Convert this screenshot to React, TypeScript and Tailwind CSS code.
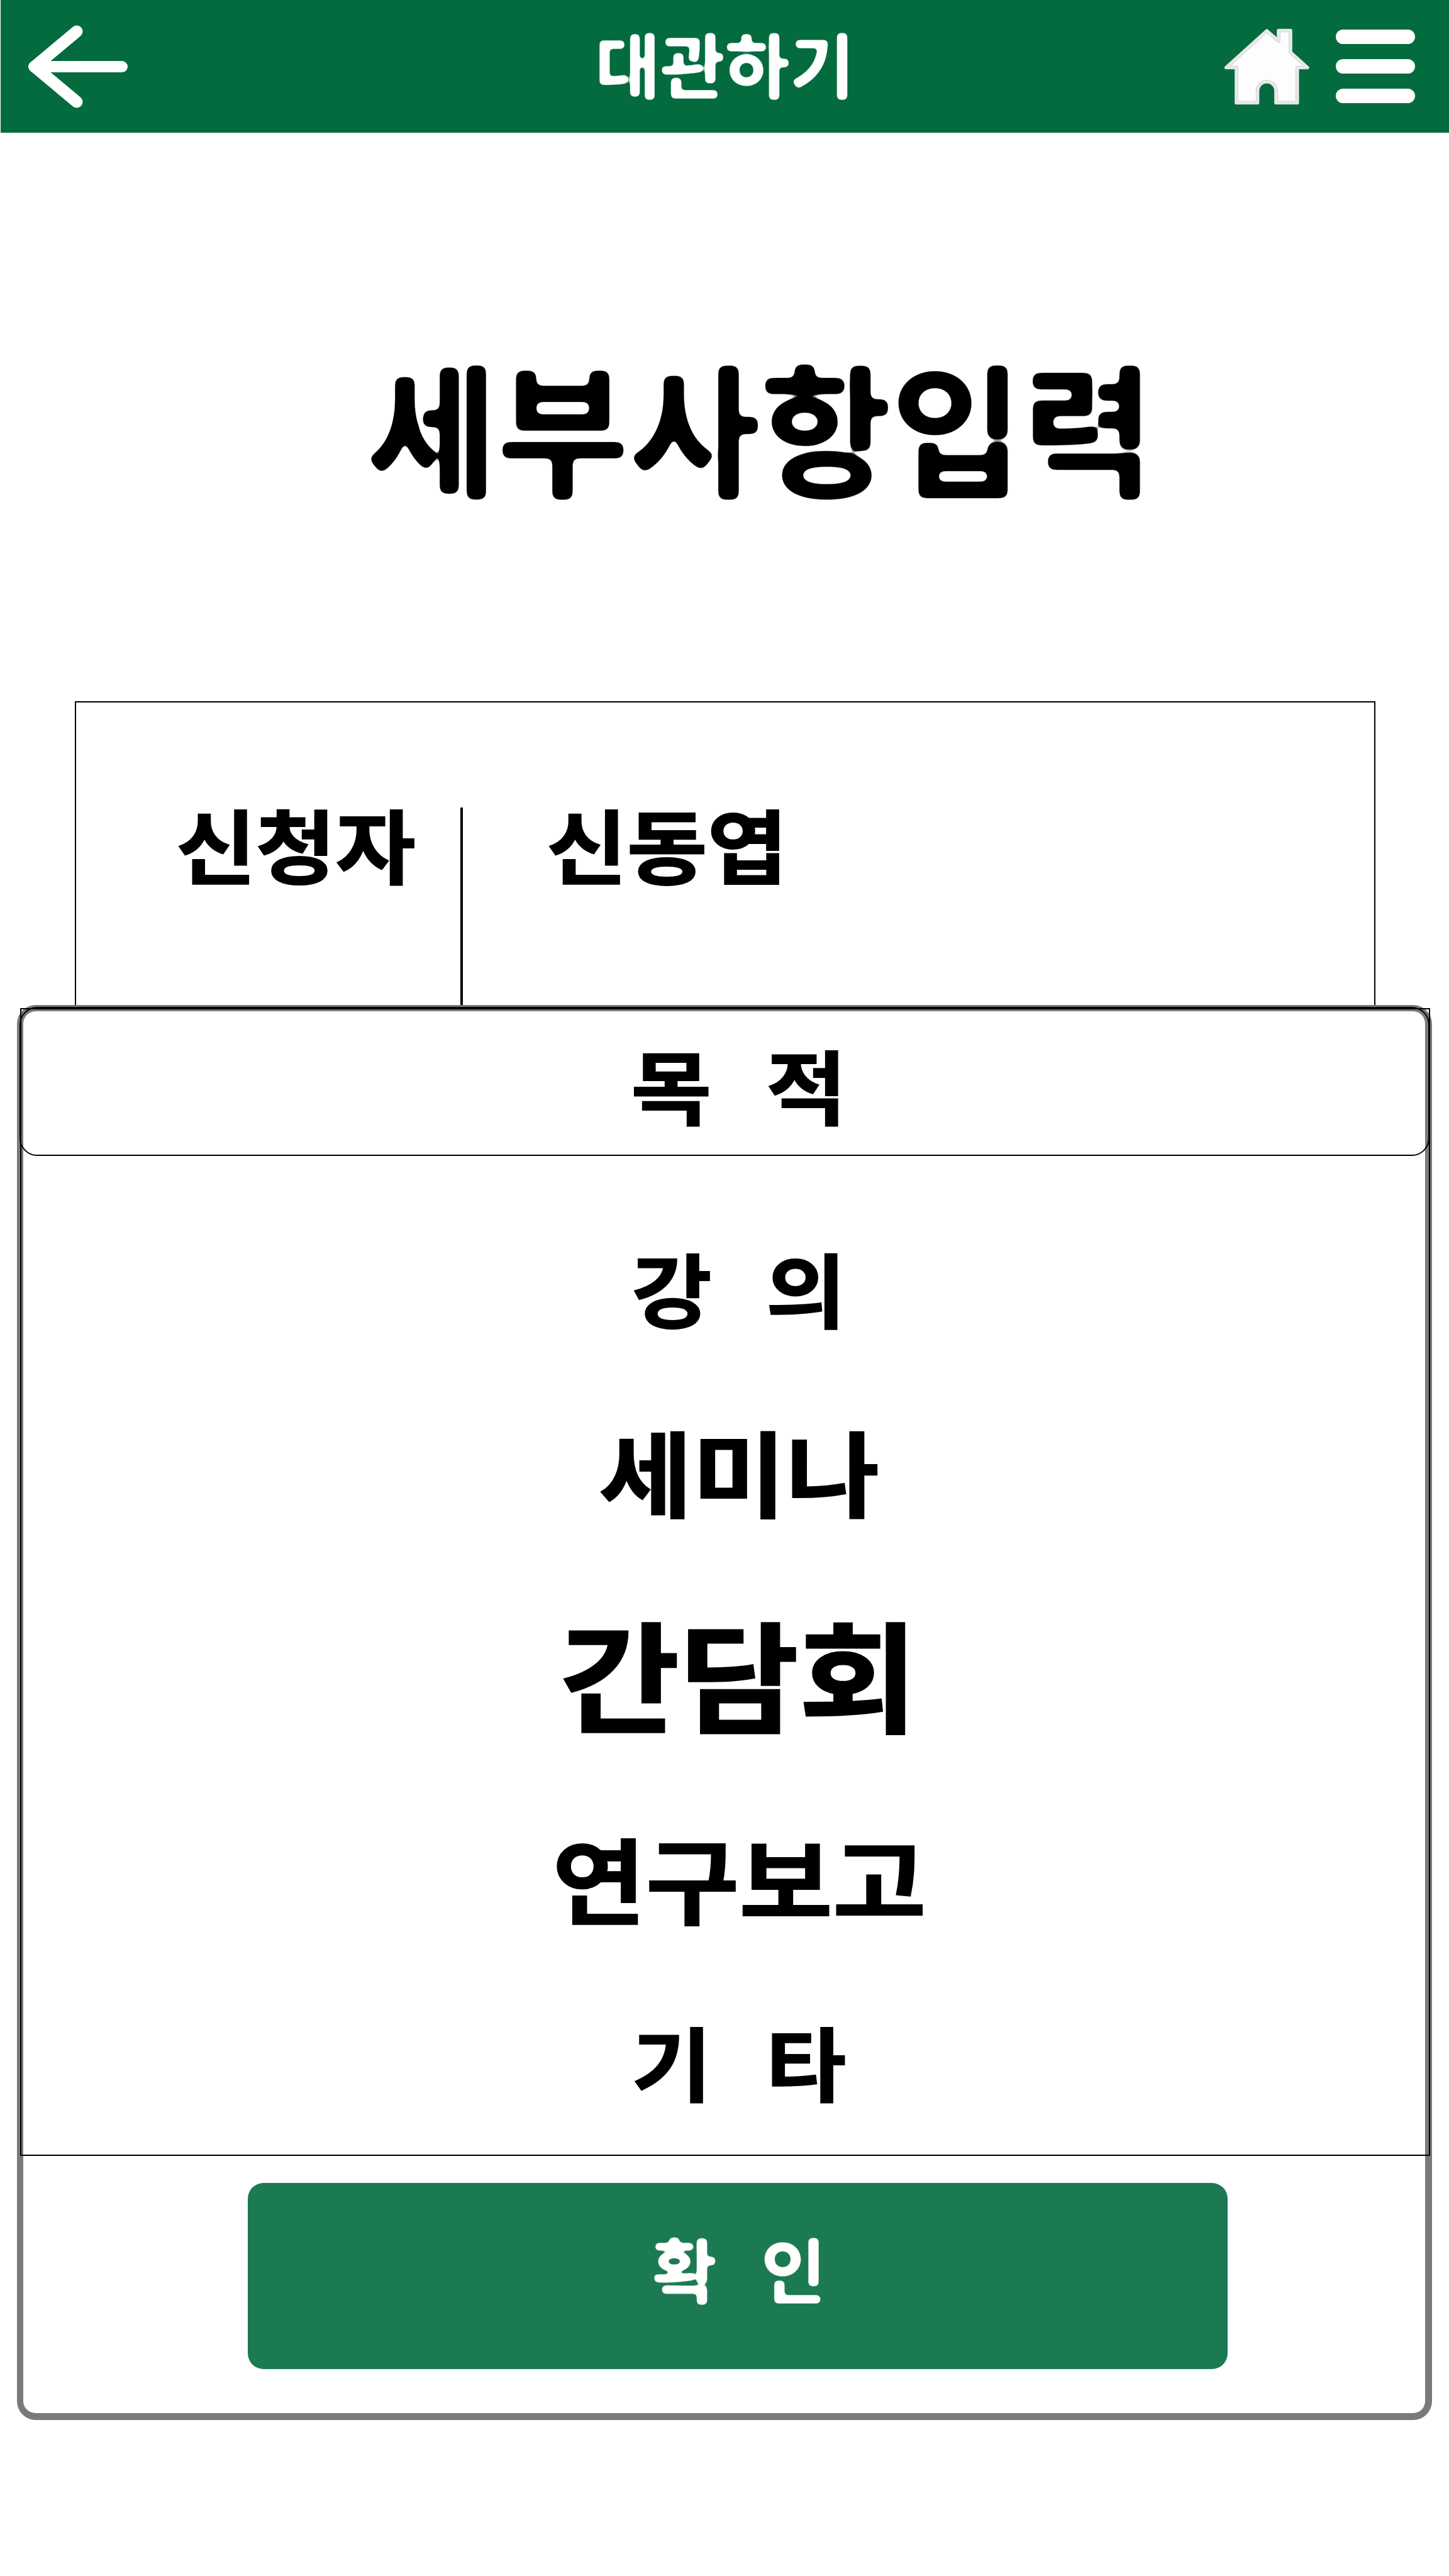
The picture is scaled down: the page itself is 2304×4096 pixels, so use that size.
function BackArrow() {
  return (
    <svg className="block h-[138px] w-[164px]" viewBox="0 0 164 138" fill="none" stroke="#fff" strokeLinecap="round" strokeLinejoin="round">
      <path d="M11 69H151" strokeWidth="18" />
      <path d="M79 13L12 69L79 125" strokeWidth="19" />
    </svg>
  );
}

const HOUSE =
  "M427 193L500 256V191H575V327L680 422H617V641H484V567A57 57 0 0 0 370 567V641H238V422H174Z";

function HomeIcon() {
  return (
    <svg className="block h-[122px] w-[136px]" viewBox="160 178 532 476" strokeLinejoin="round">
      <path d={HOUSE} fill="#fdfdfd" stroke="#b9bfbc" strokeWidth="22" />
      <path d={HOUSE} fill="none" stroke="#e8e9e8" strokeWidth="18" />
    </svg>
  );
}

function MenuIcon() {
  return (
    <div className="flex flex-col gap-6">
      <div className="h-[23px] w-[126px] rounded-full bg-white" />
      <div className="h-[23px] w-[126px] rounded-full bg-white" />
      <div className="h-[23px] w-[126px] rounded-full bg-white" />
    </div>
  );
}

/* Softens glyph corners so the headings look like a rounded typeface. */
function RoundFilters() {
  return (
    <svg className="absolute h-0 w-0" aria-hidden="true">
      <filter id="round-lg" x="-5%" y="-10%" width="110%" height="120%" colorInterpolationFilters="sRGB">
        <feGaussianBlur stdDeviation="6" />
        <feComponentTransfer>
          <feFuncA type="linear" slope="12" intercept="-4.6" />
        </feComponentTransfer>
      </filter>
      <filter id="round-sm" x="-5%" y="-10%" width="110%" height="120%" colorInterpolationFilters="sRGB">
        <feGaussianBlur stdDeviation="3" />
        <feComponentTransfer>
          <feFuncA type="linear" slope="7" intercept="-2.4" />
        </feComponentTransfer>
      </filter>
    </svg>
  );
}

const purposes = [
  { label: "강 의", style: "mt-[145px] text-[128px] leading-none scale-x-[1.08] [word-spacing:51px]" },
  { label: "세미나", style: "mt-[152px] text-[148px] leading-none scale-x-[1.092]" },
  { label: "간담회", style: "mt-[152px] text-[190px] leading-none scale-x-[1.085] [-webkit-text-stroke-width:3px]" },
  { label: "연구보고", style: "mt-[157px] text-[148px] leading-none scale-x-[1.092]" },
  { label: "기 타", style: "mt-[155px] text-[128px] leading-none scale-x-[1.08] [word-spacing:51px]" },
];

export default function App() {
  return (
    <div className="relative flex h-[4096px] w-[2304px] flex-col overflow-hidden bg-white font-['Noto_Sans_CJK_KR',sans-serif] font-bold text-black">
      <RoundFilters />
      <header className="ml-px grid h-[211px] shrink-0 grid-cols-[1fr_auto_1fr] items-center bg-[#046b3f] pr-[54px] pl-[42px] text-white">
        <BackArrow />
        <div className="pb-[14px] pl-[12px] text-[112px] leading-none [filter:url(#round-sm)]">대관하기</div>
        <div className="flex items-center justify-end gap-[42px]">
          <HomeIcon />
          <MenuIcon />
        </div>
      </header>

      <h1 className="mt-[350px] pl-[113px] text-center text-[227px] leading-none whitespace-nowrap [filter:url(#round-lg)]">세부사항입력</h1>

      <section className="mt-[327px] ml-[119px] flex h-[500px] w-[2068px] shrink-0 border-2 border-black pt-[160px] pl-[159px] leading-none whitespace-nowrap [-webkit-text-stroke:2px_black]">
        <div className="w-[452px] text-[128px]">
          <div className="origin-left scale-x-[1.077]">신청자</div>
        </div>
        <div className="mt-[7px] w-1 bg-black" />
        <div className="ml-[133px] text-[128px]">
          <div className="origin-left scale-x-[1.085]">신동엽</div>
        </div>
      </section>

      <div role="dialog" className="absolute top-[1598px] left-[27px] h-[2250px] w-[2250px] rounded-[30px] border-t-[10px] border-r-[11px] border-b-[11px] border-l-[10px] border-[#7a7a7a] bg-white">
        <div className="-mt-[5px] -ml-[5px] flex h-[1825px] w-[2242px] flex-col border-2 border-black leading-none whitespace-nowrap [-webkit-text-stroke:2px_black]">
          <div className="-mt-[4px] -ml-[3px] flex h-[237px] w-[2242px] shrink-0 justify-center rounded-[28px] border-2 border-black pt-[57px] pl-[46px]">
            <div className="scale-x-[1.085] text-[128px] [word-spacing:51px]">목 적</div>
          </div>
          <div className="flex flex-col items-center pl-[44px]">
            {purposes.map((p) => (
              <div key={p.label} className={p.style}>
                {p.label}
              </div>
            ))}
          </div>
        </div>
        <button className="mt-[43px] ml-[357px] flex h-[296px] w-[1558px] items-center justify-center rounded-[25px] bg-[#1c7a52] pb-[28px] pl-1 text-[112px] leading-none text-white">
          <span className="[filter:url(#round-sm)] [word-spacing:45px]">확 인</span>
        </button>
      </div>
    </div>
  );
}
